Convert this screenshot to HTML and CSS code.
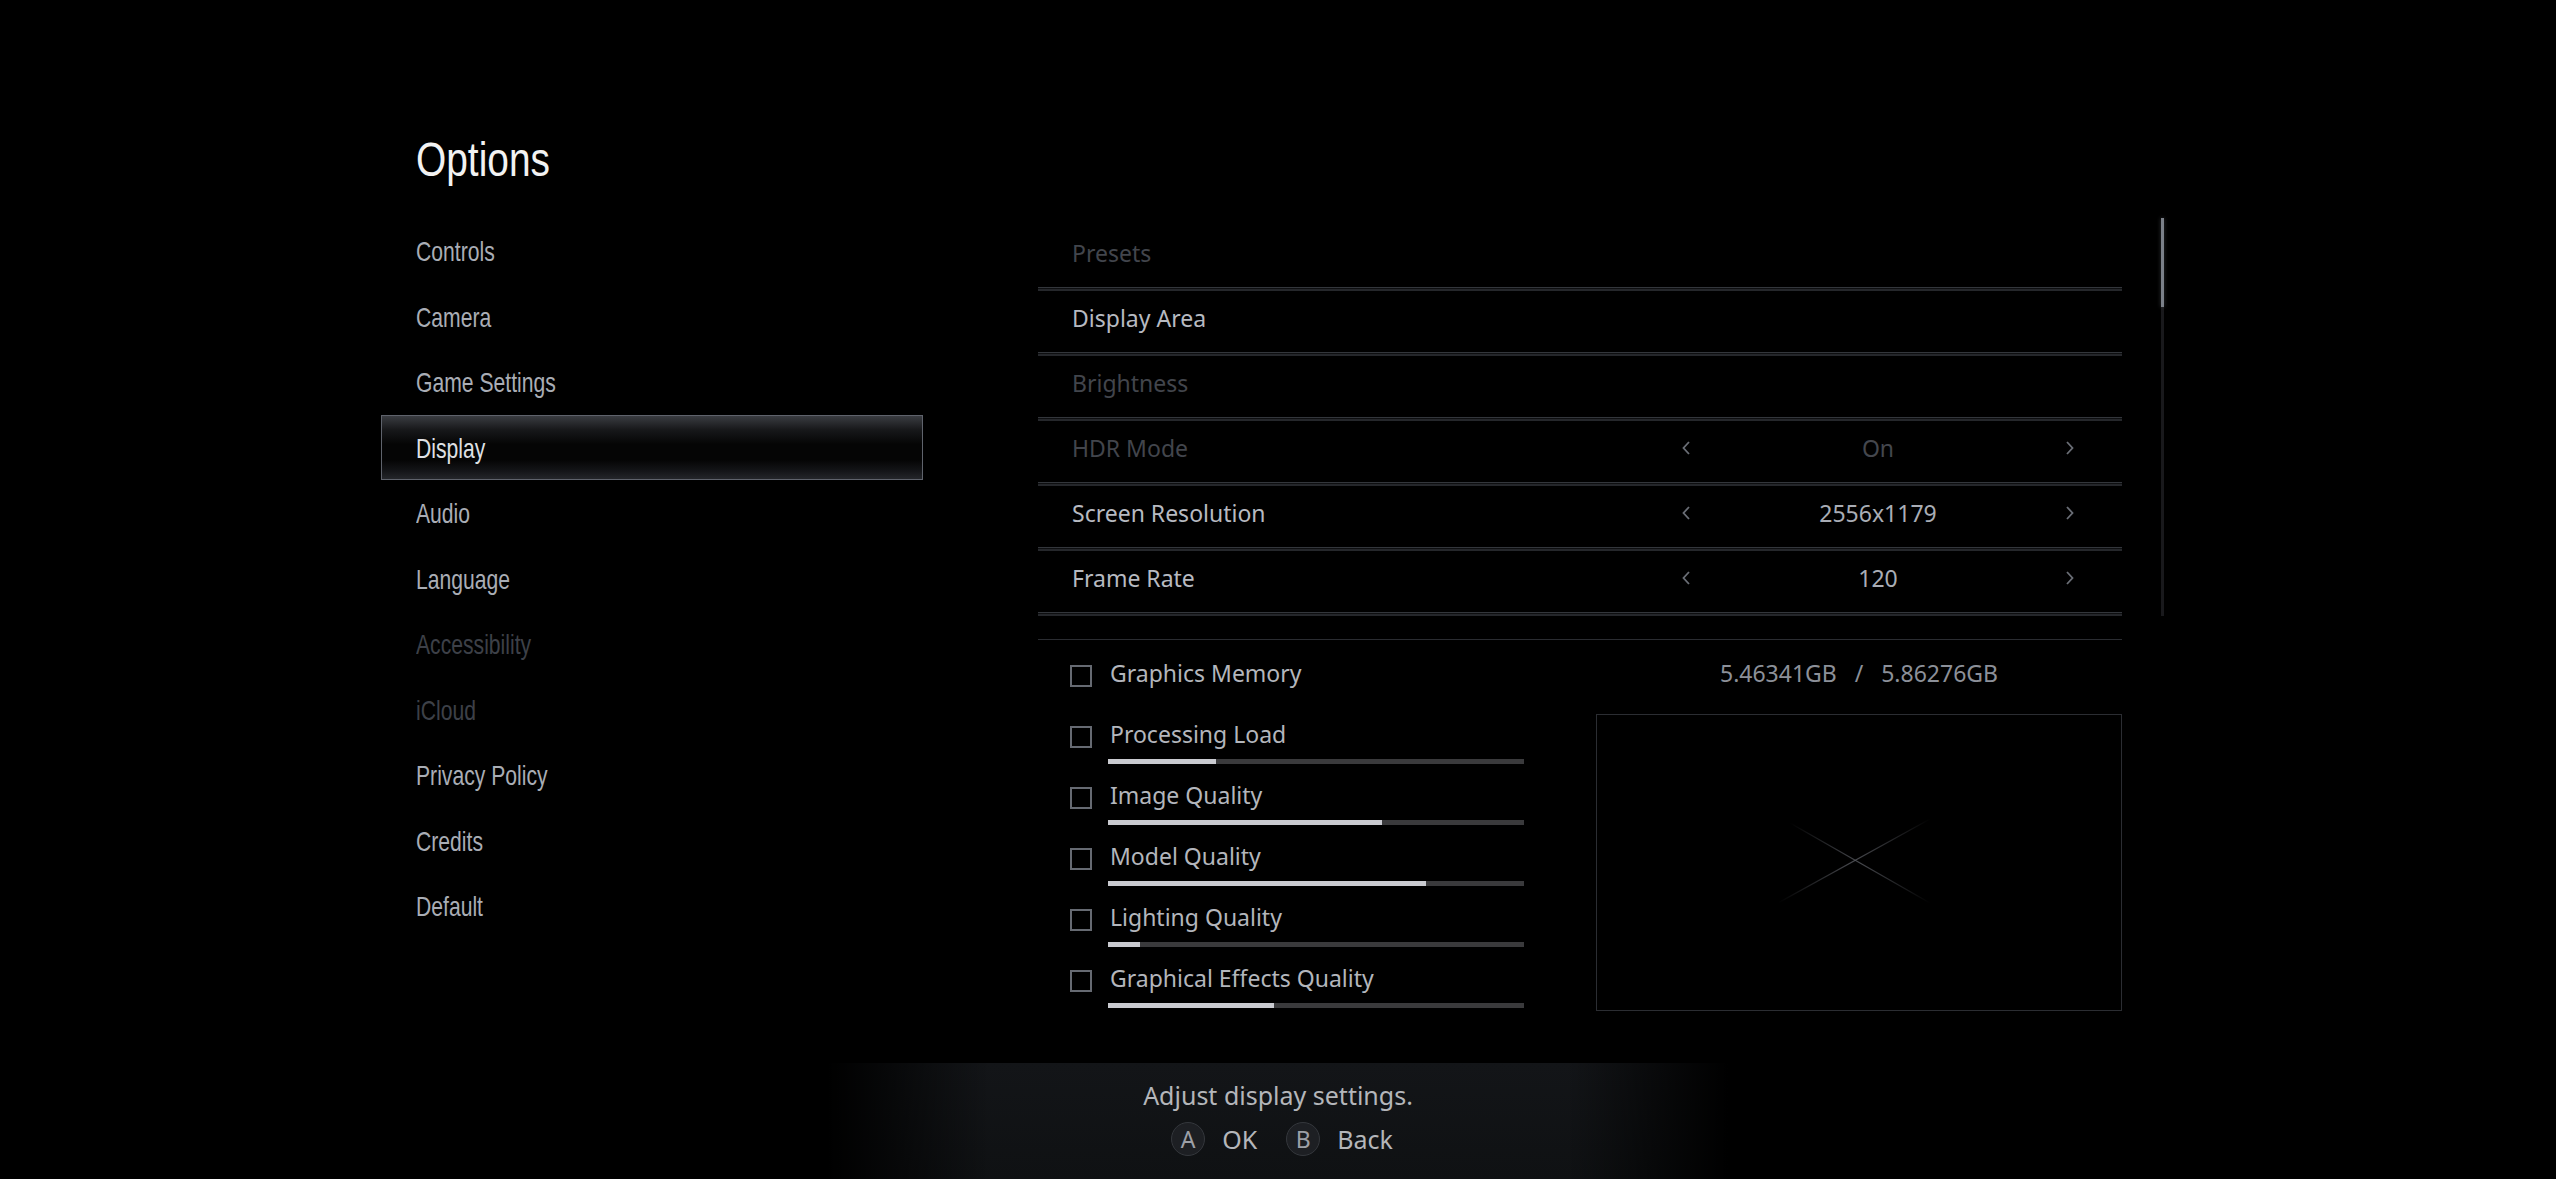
FILE: index.html
```html
<!DOCTYPE html>
<html lang="en">
<head>
    <meta charset="UTF-8">
    <meta name="viewport" content="width=device-width, initial-scale=1.0">
    <title>Options</title>
    <link rel="stylesheet" href="styles.css">
</head>
<body>

<div class="screen">
    <header class="page-head">
        <h1><span>Options</span></h1>
    </header>

    <div class="content">
        <nav class="menu">
            <div class="menu-item"><span>Controls</span></div>
            <div class="menu-item"><span>Camera</span></div>
            <div class="menu-item"><span>Game Settings</span></div>
            <div class="menu-item selected"><span>Display</span></div>
            <div class="menu-item"><span>Audio</span></div>
            <div class="menu-item"><span>Language</span></div>
            <div class="menu-item disabled"><span>Accessibility</span></div>
            <div class="menu-item disabled"><span>iCloud</span></div>
            <div class="menu-item"><span>Privacy Policy</span></div>
            <div class="menu-item"><span>Credits</span></div>
            <div class="menu-item"><span>Default</span></div>
        </nav>

        <section class="panel">
            <div class="panel-scroll">
                <ul class="setting-list">
                    <li class="setting disabled"><span class="setting-name">Presets</span></li>
                    <li class="setting"><span class="setting-name">Display Area</span></li>
                    <li class="setting disabled"><span class="setting-name">Brightness</span></li>
                    <li class="setting disabled">
                        <span class="setting-name">HDR Mode</span>
                        <div class="stepper">
                            <svg class="chevron" viewBox="0 0 8 14"><path d="M7 1 L1.5 7 L7 13"/></svg>
                            <span class="stepper-value">On</span>
                            <svg class="chevron" viewBox="0 0 8 14"><path d="M1 1 L6.5 7 L1 13"/></svg>
                        </div>
                    </li>
                    <li class="setting">
                        <span class="setting-name">Screen Resolution</span>
                        <div class="stepper">
                            <svg class="chevron" viewBox="0 0 8 14"><path d="M7 1 L1.5 7 L7 13"/></svg>
                            <span class="stepper-value">2556x1179</span>
                            <svg class="chevron" viewBox="0 0 8 14"><path d="M1 1 L6.5 7 L1 13"/></svg>
                        </div>
                    </li>
                    <li class="setting">
                        <span class="setting-name">Frame Rate</span>
                        <div class="stepper">
                            <svg class="chevron" viewBox="0 0 8 14"><path d="M7 1 L1.5 7 L7 13"/></svg>
                            <span class="stepper-value">120</span>
                            <svg class="chevron" viewBox="0 0 8 14"><path d="M1 1 L6.5 7 L1 13"/></svg>
                        </div>
                    </li>
                </ul>
                <div class="scrollbar"><div class="scrollbar-thumb"></div></div>
            </div>

            <div class="separator"></div>

            <div class="load">
                <div class="load-items">
                    <div class="load-row memory-row">
                        <span class="checkbox"></span>
                        <span class="load-name">Graphics Memory</span>
                    </div>
                    <div class="quality">
                        <div class="load-row">
                            <span class="checkbox"></span>
                            <span class="load-name">Processing Load</span>
                        </div>
                        <div class="bar"><div class="bar-fill" style="width: 26%"></div></div>
                    </div>
                    <div class="quality">
                        <div class="load-row">
                            <span class="checkbox"></span>
                            <span class="load-name">Image Quality</span>
                        </div>
                        <div class="bar"><div class="bar-fill" style="width: 65.8%"></div></div>
                    </div>
                    <div class="quality">
                        <div class="load-row">
                            <span class="checkbox"></span>
                            <span class="load-name">Model Quality</span>
                        </div>
                        <div class="bar"><div class="bar-fill" style="width: 76.4%"></div></div>
                    </div>
                    <div class="quality">
                        <div class="load-row">
                            <span class="checkbox"></span>
                            <span class="load-name">Lighting Quality</span>
                        </div>
                        <div class="bar"><div class="bar-fill" style="width: 7.7%"></div></div>
                    </div>
                    <div class="quality">
                        <div class="load-row">
                            <span class="checkbox"></span>
                            <span class="load-name">Graphical Effects Quality</span>
                        </div>
                        <div class="bar"><div class="bar-fill" style="width: 40%"></div></div>
                    </div>
                </div>

                <div class="load-preview">
                    <div class="memory">5.46341GB&nbsp;&nbsp;&nbsp;/&nbsp;&nbsp;&nbsp;5.86276GB</div>
                    <div class="preview">
                        <!-- faint cross in the middle of the empty preview -->
                        <svg class="preview-cross" viewBox="0 0 524 295">
                            <defs>
                                <linearGradient id="crossA" gradientUnits="userSpaceOnUse" x1="193" y1="108" x2="333" y2="188">
                                    <stop offset="0" stop-color="#55575d" stop-opacity="0"/>
                                    <stop offset="0.5" stop-color="#55575d" stop-opacity="0.85"/>
                                    <stop offset="1" stop-color="#55575d" stop-opacity="0"/>
                                </linearGradient>
                                <linearGradient id="crossB" gradientUnits="userSpaceOnUse" x1="333" y1="104" x2="181" y2="188">
                                    <stop offset="0" stop-color="#55575d" stop-opacity="0"/>
                                    <stop offset="0.5" stop-color="#55575d" stop-opacity="0.85"/>
                                    <stop offset="1" stop-color="#55575d" stop-opacity="0"/>
                                </linearGradient>
                            </defs>
                            <line x1="193" y1="108" x2="333" y2="188" stroke="url(#crossA)" stroke-width="1.3"/>
                            <line x1="333" y1="104" x2="181" y2="188" stroke="url(#crossB)" stroke-width="1.3"/>
                        </svg>
                    </div>
                </div>
            </div>
        </section>
    </div>

    <footer class="help-bar">
        <p class="help-text">Adjust display settings.</p>
        <div class="help-buttons">
            <span class="pad-button">A</span>
            <span class="help-label">OK</span>
            <span class="pad-button">B</span>
            <span class="help-label">Back</span>
        </div>
    </footer>
</div>

</body>
</html>
```

FILE: styles.css
```css
html, body {
    margin: 0;
    padding: 0;
    background-color: #000;
}

body {
    width: 2556px;
    height: 1179px;
    overflow: hidden;
}

.screen {
    height: 1179px;
    display: flex;
    flex-direction: column;
}

/* title */

.page-head {
    height: 221px;
}

.page-head h1 {
    margin: 0;
    padding: 131px 0 0 416px;
    font-family: "Liberation Sans", Arial, sans-serif;
    font-size: 48px;
    line-height: 58px;
    font-weight: normal;
    color: #f2f2f2;
}

/* no condensed face is installed, so the menu text is narrowed by hand */
.page-head h1 span,
.menu-item span {
    display: inline-block;
    transform-origin: left center;
}

.page-head h1 span {
    transform: scaleX(0.81);
}

.content {
    display: flex;
    padding-left: 381px;
}

/* left menu */

.menu {
    width: 542px;
    margin: -3px 115px 0 0;
}

.menu-item {
    height: 60.5px;
    line-height: 60.5px;
    padding: 3px 0 0 34px;
    border: 1px solid transparent;
    font-family: "Liberation Sans", Arial, sans-serif;
    font-size: 28px;
    color: #a9adb5;
}

.menu-item span {
    transform: scaleX(0.755);
}

.menu-item.selected {
    color: #dfe0e4;
    border-color: #5f636c;
    background: linear-gradient(to bottom, #3a3c41 0%, #17181a 22%, #050505 45%, #050505 70%, #151619 88%, #24262a 100%);
}

.menu-item.disabled {
    color: #3d4048;
}

/* right panel */

.panel {
    width: 1126px;
    font-family: "Noto Sans", "Open Sans", sans-serif;
}

.panel-scroll {
    display: flex;
    align-items: flex-start;
}

.setting-list {
    list-style: none;
    margin: 0;
    padding: 5px 0 0 0;
    width: 1084px;
}

.setting {
    display: flex;
    align-items: center;
    height: 54px;
    padding: 0 0 11px 34px;
    font-size: 23px;
    line-height: 54px;
    color: #b7bac1;
    background:
        linear-gradient(to bottom, #33363b 0, #33363b 1px, #0e0f11 1px, #0e0f11 2px, #25272b 2px, #25272b 4px) left bottom / 100% 4px no-repeat;
}

.setting.disabled {
    color: #42454c;
}

.setting-name {
    flex: 1;
}

.stepper {
    width: 392px;
    margin-right: 48px;
    display: flex;
    align-items: center;
    justify-content: space-between;
}

.stepper-value {
    color: #a9adb5;
}

.setting.disabled .stepper-value {
    color: #44474e;
}

.chevron {
    width: 8px;
    height: 14px;
    fill: none;
    stroke: #6a6e76;
    stroke-width: 1.8;
}

.scrollbar {
    width: 3px;
    height: 398px;
    margin: -3px 0 0 39px;
    background-color: #19191c;
}

.scrollbar-thumb {
    height: 89px;
    background-color: #7b8089;
    box-shadow: 0 0 4px rgba(120, 126, 136, 0.4);
}

.separator {
    width: 1084px;
    height: 1px;
    margin-top: 23px;
    background-color: #2a2c31;
}

/* load section */

.load {
    width: 1084px;
    display: grid;
    grid-template-columns: 1fr 526px;
    padding-top: 16px;
}

.load-items {
    padding-left: 32px;
}

.load-row {
    display: flex;
    align-items: flex-start;
    height: 34px;
    font-size: 23px;
    line-height: 34px;
    color: #b3b6bc;
}

.memory-row {
    margin-bottom: 27px;
}

.checkbox {
    width: 18px;
    height: 18px;
    margin: 9px 18px 0 0;
    border: 2px solid #666a72;
}

.quality {
    height: 61px;
}

.bar {
    width: 416px;
    height: 5px;
    margin: 8px 0 0 38px;
    background-color: #3a3a3c;
}

.bar-fill {
    height: 100%;
    background-color: #c9cad0;
}

.memory {
    height: 34px;
    line-height: 34px;
    font-size: 23px;
    text-align: center;
    color: #8c9099;
}

.preview {
    height: 295px;
    margin-top: 24px;
    border: 1px solid #2b2d32;
}

.preview-cross {
    display: block;
    width: 100%;
    height: 100%;
}

/* bottom help bar */

.help-bar {
    margin: auto auto 0;
    width: 900px;
    height: 102px;
    padding-top: 14px;
    text-align: center;
    font-family: "Noto Sans", "Open Sans", sans-serif;
    background:
        linear-gradient(to right, rgba(0, 0, 0, 1) 0%, rgba(0, 0, 0, 0) 18%, rgba(0, 0, 0, 0) 82%, rgba(0, 0, 0, 1) 100%),
        linear-gradient(to bottom, #131518 0%, #0f1113 100%);
}

.help-text {
    margin: 0;
    font-size: 25px;
    line-height: 36px;
    color: #b4b6ba;
}

.help-buttons {
    display: flex;
    justify-content: center;
    align-items: center;
    height: 36px;
    margin-top: 8px;
    padding-left: 8px;
}

.pad-button {
    width: 32px;
    height: 32px;
    line-height: 32px;
    border-radius: 50%;
    border: 1px solid #34373c;
    background-color: #1d1f23;
    font-size: 23px;
    color: #9da0a7;
}

.help-label {
    margin: 0 29px 0 17px;
    font-size: 25px;
    color: #b4b6ba;
}

.help-label:last-child {
    margin-right: 0;
}
```
